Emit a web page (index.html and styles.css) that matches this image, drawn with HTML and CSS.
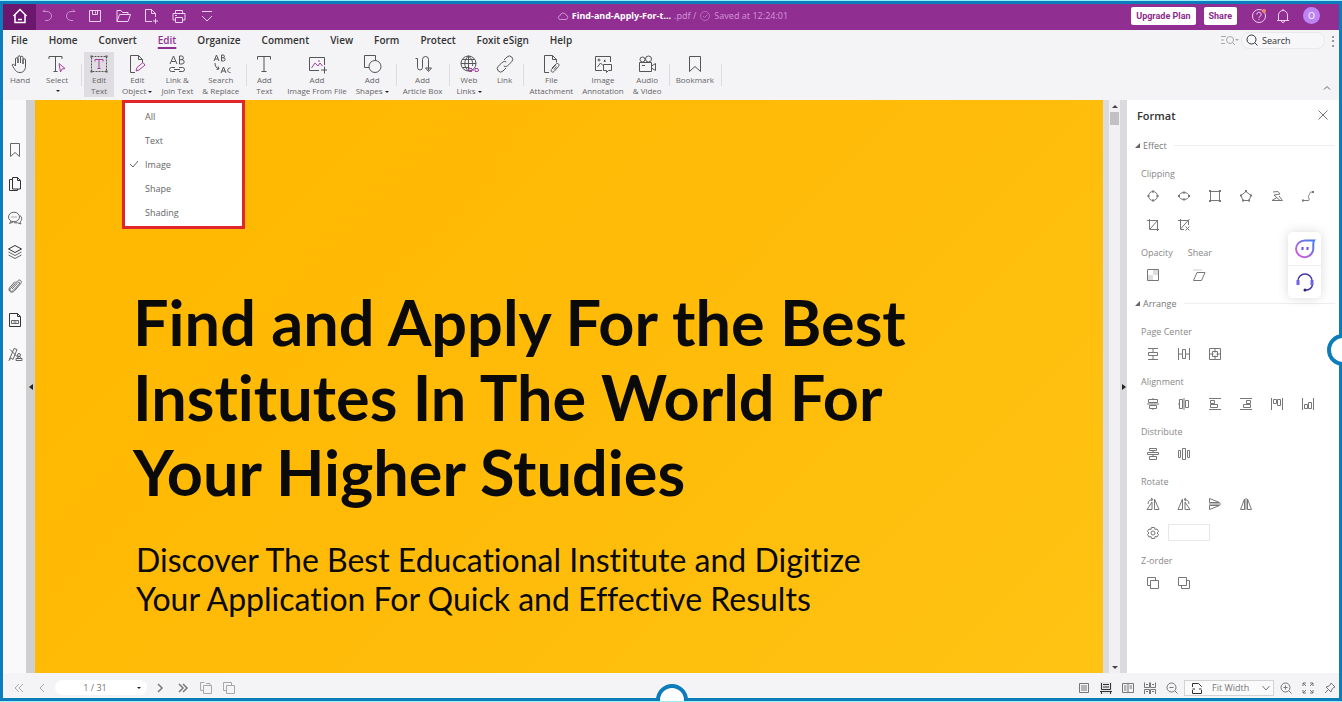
FILE: index.html
```html
<!DOCTYPE html>
<html lang="en">
<head>
    <meta charset="utf-8">
    <title>Find-and-Apply-For-the-Best.pdf</title>
    <link rel="stylesheet" href="styles.css">
</head>
<body>
<div class="frame">
    <div class="app">
        <header class="titlebar">
            <button class="home-btn" aria-label="Home">
                <svg class="icon" viewBox="0 0 16 16"><path class="thick" d="M1.500 8 8 1.500 14.500 8M3 7v7.500h10V7M6 11.500h4"/></svg>
            </button>
            <div class="quick">
                <button aria-label="Undo"><svg class="icon dim" viewBox="0 0 16 16"><path d="M4 3.500h4a4 4 0 0 1 0 9H6M4 3.500l2-2"/></svg></button>
                <button aria-label="Redo"><svg class="icon dim" viewBox="0 0 16 16"><path d="M12 3.500H8a4 4 0 0 0 0 9h2M12 3.500l-2-2"/></svg></button>
                <button aria-label="Save"><svg class="icon" viewBox="0 0 16 16"><path d="M2.500 2.500h11v11h-11zM5.500 2.500v4h5v-4M8.500 3.500v2"/></svg></button>
                <button aria-label="Open"><svg class="icon" viewBox="0 0 16 16"><path d="M2 13.500v-11h4l1.500 2h5.500v2M2 13.500l2.500-7h11l-2.500 7z"/></svg></button>
                <button aria-label="New"><svg class="icon" viewBox="0 0 16 16"><path d="M9 13.500H2.500v-12h6l4 4V9M8.500 1.500v4h4M12.500 10.500v5M10 13h5"/></svg></button>
                <button aria-label="Print"><svg class="icon" viewBox="0 0 16 16"><path d="M4.500 5V2.500h7V5M4 12H2V5.500h12V12h-2M4.500 9.500h7v5h-7zM4 7.500h2"/></svg></button>
                <button aria-label="More"><svg class="icon" viewBox="0 0 16 16"><path d="M3 3.500h10M3 8l5 5 5-5"/></svg></button>
            </div>
            <div class="doc-name">
                <svg class="icon-s" viewBox="0 0 12 12"><path d="M3.500 9.500a2 2 0 0 1-.3-4 3 3 0 0 1 5.800-.5 2.300 2.300 0 0 1 0 4.500z"/></svg>
                <b>Find-and-Apply-For-t...</b>
                <span>.pdf /</span>
                <svg class="icon-s dim" viewBox="0 0 12 12"><circle cx="6" cy="6" r="4.500"/><path d="m4 6 1.500 1.500L8.500 4.500"/></svg>
                <span>Saved at 12:24:01</span>
            </div>
            <div class="account">
                <button class="pill">Upgrade Plan</button>
                <button class="pill">Share</button>
                <button class="bar-icon first" aria-label="Help"><svg class="icon" viewBox="0 0 16 16"><circle cx="8" cy="8" r="6.500"/><path d="M5.800 6.500a2.200 2.200 0 1 1 3 2c-.6.300-.8.600-.8 1.300M8 11v1"/><circle class="dot" cx="13" cy="3" r="2"/></svg></button>
                <button class="bar-icon" aria-label="Notifications"><svg class="icon" viewBox="0 0 16 16"><path d="M2 12.500h12M3.500 12.500V7a4.500 4.500 0 0 1 9 0v5.500M6.500 13a1.500 1.500 0 0 0 3 0M8 2.500V1"/></svg></button>
                <button class="avatar">O</button>
            </div>
        </header>

        <nav class="tabs">
            <button class="tab">File</button>
            <button class="tab">Home</button>
            <button class="tab">Convert</button>
            <button class="tab active">Edit</button>
            <button class="tab">Organize</button>
            <button class="tab">Comment</button>
            <button class="tab">View</button>
            <button class="tab">Form</button>
            <button class="tab">Protect</button>
            <button class="tab">Foxit eSign</button>
            <button class="tab">Help</button>
            <div class="search-area">
                <button class="find-opt" aria-label="Search options"><svg class="icon-w" viewBox="0 0 20 12"><path d="M2 2.500h5M2 6h3M2 9.500h4M14 9l2 2"/><circle cx="11" cy="6" r="3.500"/><path class="solid" d="M16 5h4l-2 2z"/></svg></button>
                <label class="search">
                    <svg class="icon-s" viewBox="0 0 12 12"><circle cx="5.500" cy="5.500" r="4.500"/><path d="m9 9 2.500 2.500"/></svg>
                    <input type="text" placeholder="Search" aria-label="Search">
                </label>
                <button class="kebab" aria-label="More options">⋮</button>
            </div>
        </nav>

        <div class="ribbon">
            <button class="tool gap-l"><svg class="icon-l" viewBox="0 0 20 20"><path d="M5.500 12V5a1.200 1.200 0 0 1 2.500 0v4V3a1.200 1.200 0 0 1 2.500 0v6V3.500a1.200 1.200 0 0 1 2.500 0V10 6a1.200 1.200 0 0 1 2.500 0v6c0 4-2 6.500-5.500 6.500-4 0-5-2.500-8-7.500 1-1.500 2.500-.5 3.500 1z"/></svg>Hand</button>
            <button class="tool tool-arrow gap-l"><svg class="icon-l" viewBox="0 0 20 20"><path d="M2 5V2.500h13V5M8.500 2.500v15M6.500 17.500h4"/><path class="acc" d="m12 9.500 6 5-3 .5-1.500 3z"/></svg>Select<i class="caret"></i></button>
            <span class="sep"></span>
            <button class="tool on gap-s"><svg class="icon-l" viewBox="0 0 20 20"><path stroke-dasharray="2 1" d="M2.500 2.500h15v15h-15z"/><path class="solid" d="M1.500 1.500h2v2h-2zM16.500 1.500h2v2h-2zM1.500 16.500h2v2h-2zM16.500 16.500h2v2h-2z"/><path class="acc" d="M6 7.500V5.500h8v2M10 5.500v9M8.500 14.500h3"/></svg>Edit<br>Text</button>
            <div class="tool-wrap">
                <button class="tool"><svg class="icon-l" viewBox="0 0 20 20"><path d="M8 18.500H3.500v-17h8l4 4v3M11.500 1.500v4h4"/><path class="acc" d="m9 17 1-3.500 6-5 2 2.500-6 5z"/></svg>Edit<br><span>Object<i class="caret"></i></span></button>
                <ul class="menu">
                    <li><button class="menu-item">All</button></li>
                    <li><button class="menu-item">Text</button></li>
                    <li><button class="menu-item"><svg class="check" viewBox="0 0 10 10"><path d="m1 5 3 3 5-6"/></svg>Image</button></li>
                    <li><button class="menu-item">Shape</button></li>
                    <li><button class="menu-item">Shading</button></li>
                </ul>
            </div>
            <button class="tool"><svg class="icon-l" viewBox="0 0 20 20"><path d="m3 10 3.500-8L10 10M4.500 7.500h4M12.500 2v8h2.500a2 2 0 0 0 0-4.300h-2.500M12.500 2h2a1.800 1.800 0 0 1 0 3.700M8 13.500H4.500a2 2 0 0 0 0 4H8M12 13.500h3.500a2 2 0 0 1 0 4H12M7 15.500h6"/></svg>Link &amp;<br>Join Text</button>
            <button class="tool"><svg class="icon-l" viewBox="0 0 20 20"><path d="m3 7 2.500-6L8 7M4 5h3M10.500 1v6h2a1.500 1.500 0 0 0 0-3.200h-2M10.500 1h1.500a1.300 1.300 0 0 1 0 2.800M4 9c0 3 1 5 4 6M8 15l-2.500.5M8 15l-1-2.500M10 19l2.500-6 2.500 6M11 17h3M19.500 14a2.300 2.300 0 1 0 0 4.500"/></svg>Search<br>&amp; Replace</button>
            <span class="sep"></span>
            <button class="tool gap-s"><svg class="icon-l" viewBox="0 0 20 20"><path d="M3.500 5.500v-3h13v3M10 2.500v15M7.500 17.500h5"/></svg>Add<br>Text</button>
            <button class="tool"><svg class="icon-l" viewBox="0 0 20 20"><path d="M12 16.500H2.500v-13h15V11M17.500 12.500v7M14 16h6"/><path class="acc" d="m4.500 14 3.500-5 3 3 2-3 2.500 3M11 7h2"/></svg>Add<br>Image From File</button>
            <button class="tool"><svg class="icon-l" viewBox="0 0 20 20"><path d="M7 13.500H2.500v-12h11V6"/><circle cx="13" cy="12.500" r="6"/></svg>Add<br><span>Shapes<i class="caret"></i></span></button>
            <span class="sep"></span>
            <button class="tool"><svg class="icon-l" viewBox="0 0 20 20"><path d="M2.500 4.500h2v9a2.500 2.500 0 0 0 5 0v-8a3 3 0 0 1 6 0v11M12.500 14l3 3.500 3-3.500z"/></svg>Add<br>Article Box</button>
            <span class="sep"></span>
            <button class="tool gap-s"><svg class="icon-l" viewBox="0 0 20 20"><circle cx="9.500" cy="9.500" r="7.500"/><path d="M2 9.500h15M3.500 5.500h12M3.500 13.500h7M9.500 2v15M9.500 2c-5 4-5 11 0 15M9.500 2c4 3 4.500 7 4 10"/><path class="acc" d="M13 14.500h-2a1.500 1.500 0 0 0 0 3h2M16 14.500h2a1.500 1.500 0 0 1 0 3h-2M12 16h5"/></svg>Web<br><span>Links<i class="caret"></i></span></button>
            <button class="tool"><svg class="icon-l" viewBox="0 0 20 20"><path d="m9 6 3-3a3.200 3.200 0 0 1 4.700 4.700l-4 4a3.200 3.200 0 0 1-4 .3M11 14l-3 3a3.200 3.200 0 0 1-4.700-4.700l4-4a3.200 3.200 0 0 1 4-.3"/></svg>Link</button>
            <span class="sep"></span>
            <button class="tool"><svg class="icon-l" viewBox="0 0 20 20"><path d="M8 18.500H3.500v-17h8l4 4v3M11.500 1.500v4h4M11 14l4-4c2-1.500 4 .5 2.500 2.500l-4.500 5c-1.500 1.500-4 0-2.500-2l4-4.500M13 15.500l2.500-3"/></svg>File<br>Attachment</button>
            <button class="tool"><svg class="icon-l" viewBox="0 0 20 20"><path d="M9 16.500H2.500v-14h15V8M4.500 13l3-4 2.500 2.500M10.500 10.500h8v6h-3l-2 2v-2h-3zM12 5.500l-1 2 2-.5"/><circle cx="6" cy="6" r="1"/></svg>Image<br>Annotation</button>
            <button class="tool"><svg class="icon-l" viewBox="0 0 20 20"><path d="M2.500 8.500h12v9h-12zM14.500 12l4-2.500v7l-4-2.500M5 11.500h3"/><circle cx="5.500" cy="5.500" r="2.500"/><circle cx="11.500" cy="5" r="3"/></svg>Audio<br>&amp; Video</button>
            <span class="sep"></span>
            <button class="tool"><svg class="icon-l" viewBox="0 0 20 20"><path d="M4.500 2.500h11v15L10 12.500l-5.500 5z"/></svg>Bookmark</button>
            <span class="sep"></span>
            <button class="collapse" aria-label="Collapse ribbon"><svg class="icon-s" viewBox="0 0 12 12"><path d="m3 7.500 3-3 3 3"/></svg></button>
        </div>

        <main class="work">
            <aside class="rail">
                <button aria-label="Bookmarks"><svg class="icon" viewBox="0 0 16 16"><path d="M3.500 1.500h9v13L8 10.500l-4.500 4z"/></svg></button>
                <button aria-label="Pages"><svg class="icon dark" viewBox="0 0 16 16"><path d="M5.500 1.500h5l3 3v8.500h-8zM10.500 1.500v3h3M5.500 3.500h-3v11h8V13"/></svg></button>
                <button aria-label="Comments"><svg class="icon" viewBox="0 0 16 16"><ellipse cx="7" cy="7" rx="5.500" ry="4.800"/><path d="m4 11-1.500 2.500 4-1.700M13 5.500c2.500 2 2 5 0 6.500l1 2-3.500-1.200H7M4.500 7h1M6.500 7h1M8.500 7h1"/></svg></button>
                <button aria-label="Layers"><svg class="icon" viewBox="0 0 16 16"><path class="dark" d="m8 1.500 6.500 3.500L8 8.500 1.500 5z"/><path d="M1.500 8 8 11.500 14.500 8M1.500 11 8 14.500l6.500-3.500"/></svg></button>
                <button aria-label="Attachments"><svg class="icon" viewBox="0 0 16 16"><path d="m5 11 6-6.500c1-1 2.300.2 1.400 1.300l-6.500 7C4.500 14.300 2 12.500 3.500 10.500l7-7.500c2.200-2.300 5 0 3.300 2.500l-6.300 7.300c-2.500 3-7 .5-5-3L8 3.500"/></svg></button>
                <button aria-label="Fields"><svg class="icon" viewBox="0 0 16 16"><path class="dark" d="M2.500 1.500h8l3 3v10h-11zM10.500 1.500v3h3"/><path d="M4.500 8.500h7v3h-7zM6.500 10h3"/></svg></button>
                <button aria-label="Signatures"><svg class="icon" viewBox="0 0 16 16"><path d="m2 14.500 5-12 3 1-4 10-2-1.500zM3 3.500l9 9M9 14.500h6v-2H9zM10.500 12.500l.5-2h2l.5 2"/><circle cx="12" cy="9" r="1.500"/></svg></button>
            </aside>
            <button class="rail-edge" aria-label="Hide navigation"><i class="tri-left"></i></button>
            <section class="page">
                <h1 class="headline">Find and Apply For the Best<br>Institutes In The World For<br>Your Higher Studies</h1>
                <p class="subhead">Discover The Best Educational Institute and Digitize<br>Your Application For Quick and Effective Results</p>
            </section>
            <div class="scroll">
                <i class="arrow-up"></i>
                <i class="thumb"></i>
                <i class="arrow-down"></i>
            </div>
            <button class="panel-edge" aria-label="Hide format panel"><i class="tri-right"></i></button>

            <aside class="panel">
                <div class="panel-head">
                    <h2 class="panel-title">Format</h2>
                    <button class="close" aria-label="Close"><svg class="icon-s" viewBox="0 0 12 12"><path d="m1.500 1.500 9 9M10.500 1.500l-9 9"/></svg></button>
                </div>

                <h3 class="section">Effect</h3>
                <div class="group">
                    <span class="group-label">Clipping</span>
                    <div class="icons">
                        <button aria-label="Circle"><svg class="icon-p" viewBox="0 0 14 14"><circle cx="7" cy="7" r="4.500"/><path class="solid" d="M6 1.500h2v2H6zM6 10.500h2v2H6zM1.500 6h2v2h-2zM10.500 6h2v2h-2z"/></svg></button>
                        <button aria-label="Ellipse"><svg class="icon-p" viewBox="0 0 14 14"><ellipse cx="7" cy="7" rx="5" ry="3.500"/><path class="solid" d="M6 2.500h2v2H6zM6 9.500h2v2H6zM1 6h2v2H1zM11 6h2v2h-2z"/></svg></button>
                        <button aria-label="Rectangle"><svg class="icon-p" viewBox="0 0 14 14"><path d="M2.500 2.500h9v9h-9z"/><path class="solid" d="M1 1h2v2H1zM11 1h2v2h-2zM1 11h2v2H1zM11 11h2v2h-2z"/></svg></button>
                        <button aria-label="Polygon"><svg class="icon-p" viewBox="0 0 14 14"><path d="m7 2.500 5 4-2 5H4l-2-5z"/><path class="solid" d="M6 1h2v2H6zM11 5.500h2v2h-2zM1 5.500h2v2H1zM3 10.500h2v2H3zM9 10.500h2v2H9z"/></svg></button>
                        <button aria-label="Polyline"><svg class="icon-p" viewBox="0 0 14 14"><path d="m3 3 5-.5 2 2.500-6 1 6 5.500H2l5-3M9 7l3.500 4.500H8"/></svg></button>
                        <button aria-label="Curve"><svg class="icon-p" viewBox="0 0 14 14"><path d="M2 11.500h5c3 0-1-4 1-5.500s-1-3 4-3"/><path class="solid" d="M1 10.500h2v2H1zM11 2h2v2h-2z"/></svg></button>
                        <button aria-label="Edit clip"><svg class="icon-p" viewBox="0 0 14 14"><path d="M3.500 1v10.500H13M1 2.500h10.500V13M12 2l-8 9"/></svg></button>
                        <button aria-label="Clear clip"><svg class="icon-p" viewBox="0 0 14 14"><path d="M3.500 1v10.500H7M1 2.500h10.500V7M12.500 1l-9 10M8.500 8.500l4 4M12.500 8.500l-4 4"/></svg></button>
                    </div>
                </div>
                <div class="pair">
                    <div class="group">
                        <span class="group-label">Opacity</span>
                        <div class="icons"><button aria-label="Opacity"><svg class="icon-p" viewBox="0 0 14 14"><path class="tint" d="M7 2h5v5H7zM2 7h5v5H2z"/><path d="M1.500 1.500h11v11h-11z"/></svg></button></div>
                    </div>
                    <div class="group">
                        <span class="group-label">Shear</span>
                        <div class="icons"><button aria-label="Shear"><svg class="icon-p" viewBox="0 0 14 14"><path d="M5 4.500h8l-3.500 8h-8z"/><path class="faint" d="M1 2h9"/></svg></button></div>
                    </div>
                </div>

                <h3 class="section">Arrange</h3>
                <div class="group">
                    <span class="group-label">Page Center</span>
                    <div class="icons">
                        <button aria-label="Center vertically"><svg class="icon-p" viewBox="0 0 14 14"><path d="M2 1.500h10M2 12.500h10M2.500 5.500h9v3h-9zM7 1.500v4M7 8.500v4"/></svg></button>
                        <button aria-label="Center horizontally"><svg class="icon-p" viewBox="0 0 14 14"><path d="M1.500 1v12M12.500 1v12M5.500 2.500h3v9h-3zM1.500 7h4M8.500 7h4"/></svg></button>
                        <button aria-label="Center both"><svg class="icon-p" viewBox="0 0 14 14"><path d="M1.500 1.500h11v11h-11zM4.500 4.500h5v5h-5zM7 1.500v4M7 8.500v4M1.500 7h4M8.500 7h4"/></svg></button>
                    </div>
                </div>
                <div class="group">
                    <span class="group-label">Alignment</span>
                    <div class="icons">
                        <button aria-label="Align middle"><svg class="icon-p" viewBox="0 0 14 14"><path d="M2.500 2.500h9v3h-9zM3.500 8.500h7v3h-7zM1 7h12M7 1v1M7 12v1"/></svg></button>
                        <button aria-label="Align center"><svg class="icon-p" viewBox="0 0 14 14"><path d="M2.500 2.500h3v9h-3zM8.500 3.500h3v7h-3zM7 1v12M1 7h1"/></svg></button>
                        <button aria-label="Align left"><svg class="icon-p" viewBox="0 0 14 14"><path d="M1 1.500h12M1 12.500h12M2.500 3.500h4v3h-4zM2.500 7.500h7v3h-7z"/></svg></button>
                        <button aria-label="Align right"><svg class="icon-p" viewBox="0 0 14 14"><path d="M1 1.500h12M1 12.500h12M7.500 3.500h4v3h-4zM4.500 7.500h7v3h-7z"/></svg></button>
                        <button aria-label="Align top"><svg class="icon-p" viewBox="0 0 14 14"><path d="M1.500 1v12M12.500 1v12M3.500 2.500h3v4h-3zM7.500 2.500h3v6h-3z"/></svg></button>
                        <button aria-label="Align bottom"><svg class="icon-p" viewBox="0 0 14 14"><path d="M1.500 1v12M12.500 1v12M3.500 7.500h3v4h-3zM7.500 5.500h3v6h-3z"/></svg></button>
                    </div>
                </div>
                <div class="group">
                    <span class="group-label">Distribute</span>
                    <div class="icons">
                        <button aria-label="Distribute vertically"><svg class="icon-p" viewBox="0 0 14 14"><path d="M3.500 1.500h7v2h-7zM1.500 5.500h11v2h-11zM3.500 9.500h7v3h-7zM7 3.500v2M7 7.500v2"/></svg></button>
                        <button aria-label="Distribute horizontally"><svg class="icon-p" viewBox="0 0 14 14"><path d="M1.500 3.500h2v7h-2zM5.500 1.500h3v11h-3zM10.500 3.500h2v7h-2z"/></svg></button>
                    </div>
                </div>
                <div class="group">
                    <span class="group-label">Rotate</span>
                    <div class="icons">
                        <button aria-label="Rotate left"><svg class="icon-p" viewBox="0 0 14 14"><path d="M6 5v7.500H1zM8.500 2v10.500H13zM2 7c0-3 2-4.500 5-4.500M5 1l2 1.500L5 4"/></svg></button>
                        <button aria-label="Rotate right"><svg class="icon-p" viewBox="0 0 14 14"><path d="M5.500 2v10.500H1zM8 5v7.500h5zM12 7c0-3-2-4.500-5-4.500M9 1 7 2.500 9 4"/></svg></button>
                        <button aria-label="Flip vertically"><svg class="icon-p" viewBox="0 0 14 14"><path d="M1.500 1.500v4h10zM1.500 12.500v-4h10zM1 7h12"/></svg></button>
                        <button aria-label="Flip horizontally"><svg class="icon-p" viewBox="0 0 14 14"><path d="M5.500 2v10.500h-4zM8.500 2v10.500h4zM7 1v12"/></svg></button>
                    </div>
                    <div class="icons">
                        <button aria-label="Rotation angle"><svg class="icon-p" viewBox="0 0 14 14"><circle cx="7" cy="7" r="2"/><path d="M5.500 1.500h3l.5 2 2-.5 1.500 2.500L11 7l1.500 1.500L11 11l-2-.5-.5 2h-3l-.5-2-2 .5-1.500-2.500L3 7 1.500 5.500 3 3l2 .5z"/></svg></button>
                        <input class="angle" type="text" aria-label="Angle">
                    </div>
                </div>
                <div class="group">
                    <span class="group-label">Z-order</span>
                    <div class="icons">
                        <button aria-label="Bring forward"><svg class="icon-p" viewBox="0 0 14 14"><path d="M4.500 9.500h-3v-8h8v3M4.500 4.500h8v8h-8z"/></svg></button>
                        <button aria-label="Send backward"><svg class="icon-p" viewBox="0 0 14 14"><path d="M1.500 1.500h8v8h-8zM9.500 4.500h3v8h-8v-3"/></svg></button>
                    </div>
                </div>
            </aside>
        </main>

        <footer class="status">
            <div class="pager">
                <button aria-label="First page"><svg class="icon-s mid" viewBox="0 0 12 12"><path d="M6 2 2 6l4 4M10 2 6 6l4 4"/></svg></button>
                <button aria-label="Previous page"><svg class="icon-s mid" viewBox="0 0 12 12"><path d="M8 2 4 6l4 4"/></svg></button>
                <div class="page-no">
                    <input type="text" value="1 / 31" aria-label="Page">
                    <i class="caret"></i>
                </div>
                <button aria-label="Next page"><svg class="icon-s" viewBox="0 0 12 12"><path class="thick" d="m4 2 4 4-4 4"/></svg></button>
                <button aria-label="Last page"><svg class="icon-s" viewBox="0 0 12 12"><path class="thick" d="m2 2 4 4-4 4M6 2l4 4-4 4"/></svg></button>
                <button aria-label="Previous view"><svg class="icon-s mid" viewBox="0 0 12 12"><path d="M3.500 8.500h-3v-8h4M6 1.500h4v2M3.500 3.500h8v8h-8z"/></svg></button>
                <button aria-label="Next view"><svg class="icon-s mid" viewBox="0 0 12 12"><path d="M3.500 8.500h-3v-8h8v3M3.500 3.500h8v8h-8z"/></svg></button>
            </div>
            <div class="view">
                <button aria-label="Single page"><svg class="icon-s" viewBox="0 0 12 12"><path d="M1.500 1.500h9v9h-9zM3 4h6M3 6h6M3 8h6"/></svg></button>
                <button class="on" aria-label="Continuous"><svg class="icon-s dark" viewBox="0 0 12 12"><path d="M1.500 1v6.500h9V1M3 2.500h6M3 5h6M0 9.500h12M1.500 12V9.500M10.500 12V9.500"/></svg></button>
                <button aria-label="Facing"><svg class="icon-s" viewBox="0 0 12 12"><path d="M.5 1.500h11v9H.5zM6 1.500v9M2 4h2.500M2 6h2.500M2 8h2.500M7.500 4H10M7.500 6H10"/></svg></button>
                <button aria-label="Continuous facing"><svg class="icon-s" viewBox="0 0 12 12"><path d="M.5.500v5h5v-5M6.500.500v5h5v-5M2 2.500h2M8 2.500h2M.5 12V7.500h5V12M6.500 12V7.500h5V12M2 9.500h2M8 9.500h2"/></svg></button>
                <button aria-label="Zoom out"><svg class="icon-s" viewBox="0 0 12 12"><circle cx="5.500" cy="5.500" r="4.500"/><path d="m9 9 2.500 2.500M3.500 5.500h4"/></svg></button>
                <div class="zoom">
                    <svg class="icon-s dark" viewBox="0 0 12 12"><path d="M1.500 5V1.500h6l3 3V5M1.500 8v3.500h9V8M1.500 7h2.500M8 7h2.500"/></svg>
                    <select aria-label="Zoom level"><option>Fit Width</option></select>
                    <svg class="icon-s" viewBox="0 0 12 12"><path d="m2.500 4 3.500 4 3.500-4"/></svg>
                </div>
                <button aria-label="Zoom in"><svg class="icon-s" viewBox="0 0 12 12"><circle cx="5.500" cy="5.500" r="4.500"/><path d="m9 9 2.500 2.500M3.500 5.500h4M5.500 3.500v4"/></svg></button>
                <button aria-label="Full screen"><svg class="icon-s" viewBox="0 0 12 12"><path d="M1 4V1h3M8 1h3v3M11 8v3H8M4 11H1V8M1 1l3 3M11 1 8 4M11 11 8 8M1 11l3-3"/></svg></button>
                <button aria-label="Pin"><svg class="icon-s" viewBox="0 0 12 12"><path d="m7 1 4 4-1.500.5L7.500 8 7 10 2 5l2-.5L6.500 2.500zM4.500 7.500 1 11"/></svg></button>
            </div>
        </footer>

        <div class="chat">
            <button aria-label="AI assistant">
                <svg class="icon-xl" viewBox="0 0 22 22">
                    <defs><linearGradient id="bot" x1="1" y1="0" x2="0" y2="1"><stop offset="0" stop-color="#3f7df0"/><stop offset="1" stop-color="#e05ad8"/></linearGradient></defs>
                    <path class="bot" d="M20 2.500c-1 1.500-.7 3-.7 7.500A8.500 8.500 0 0 1 2 11c0-5 4-8.500 9-8.500z"/>
                    <path class="eyes" d="M8.500 9v3M13.500 9v3"/>
                </svg>
            </button>
            <button aria-label="Support">
                <svg class="icon-xl" viewBox="0 0 22 22"><path class="band" d="M4 10a7 7 0 0 1 14 0M18.500 13c0 3.500-3 6-7 6"/><path class="cup" d="M4 9v5M18 9v5"/><circle class="mic" cx="11" cy="19" r="1.500"/></svg>
            </button>
        </div>
    </div>
    <i class="handle handle-right"></i>
    <i class="handle handle-bottom"></i>
</div>
</body>
</html>
```
FILE: styles.css
```css
* {
    box-sizing: border-box;
}
body {
    margin: 0;
    font-family: "Open Sans", "Noto Sans", sans-serif;
    font-size: 9px;
    color: #555;
}
button, input, select {
    font: inherit;
    color: inherit;
    background: none;
    border: 0;
    padding: 0;
    margin: 0;
}
button {
    display: flex;
    align-items: center;
    justify-content: center;
}
h1, h2, h3, p, ul {
    margin: 0;
    padding: 0;
}
.frame {
    position: relative;
    height: 100vh;
    overflow: hidden;
    border: solid #96f0fa;
    border-width: 1px 0;
}
.app {
    position: relative;
    height: 100%;
    display: flex;
    flex-direction: column;
    border: 3px solid #0c7cba;
    background: #f4f3f6;
}

/* icons */
svg {
    fill: none;
    stroke: currentColor;
    stroke-width: 1;
    flex: none;
}
.icon { width: 16px; height: 16px; }
.icon-s { width: 12px; height: 12px; }
.icon-p { width: 14px; height: 14px; }
.icon-l { width: 20px; height: 20px; }
.icon-w { width: 20px; height: 12px; }
.icon-xl { width: 22px; height: 22px; }
.thick { stroke-width: 1.5; }
.solid { fill: currentColor; stroke: none; }
.tint { fill: #ddd; stroke: none; }
.faint { stroke: #ccc; }
.acc { stroke: #a5409f; }
.dot { fill: #f08a6a; stroke: none; }
.dim { opacity: 0.6; }
.mid { opacity: 0.6; }
.dark { color: #333; stroke: #333; }
.caret {
    display: inline-block;
    border: 2px solid transparent;
    border-top-color: #222;
    border-bottom: 0;
    margin-left: 2px;
    vertical-align: middle;
}

/* title bar */
.titlebar {
    display: flex;
    align-items: center;
    height: 26px;
    padding-bottom: 3px;
    background: #912e92;
    color: #f0d2f2;
}
.home-btn {
    align-self: flex-start;
    width: 33px;
    height: 26px;
    padding-bottom: 3px;
    background: #6b176d;
    color: #fff;
}
.quick {
    display: flex;
    flex: 1 0 0;
    gap: 12px;
    padding-left: 3px;
}
.quick .dim { margin-right: -4px; }
.doc-name {
    display: flex;
    align-items: center;
    gap: 3px;
    font-family: "Noto Sans", sans-serif;
    color: #cf8fd3;
}
.doc-name b { color: #fff; }
.account {
    display: flex;
    flex: 1 0 33px;
    align-items: center;
    justify-content: flex-end;
    gap: 8px;
    padding-right: 19px;
}
.pill {
    height: 18px;
    padding: 0 5px;
    border-radius: 2px;
    background: #fff;
    color: #8b2c8c;
    font-family: Roboto, sans-serif;
    font-weight: 700;
}
.bar-icon.first { margin-left: 6px; }
.avatar {
    width: 17px;
    height: 17px;
    margin-left: 4px;
    border-radius: 50%;
    background: #bd84f5;
    color: #fff;
}

/* menu tabs */
.tabs {
    display: flex;
    align-items: center;
    height: 20px;
    color: #333;
}
.tab {
    height: 20px;
    padding: 0 8px;
    margin-right: 5px;
    font-size: 10px;
    font-weight: 600;
}
.tab.active {
    color: #912e92;
    text-decoration: underline;
    text-decoration-thickness: 2px;
    text-underline-offset: 3px;
}
.search-area {
    display: flex;
    align-items: center;
    gap: 2px;
    margin-left: auto;
}
.find-opt { color: #aaa; }
.search {
    display: flex;
    align-items: center;
    gap: 4px;
    height: 17px;
    width: 84px;
    padding: 0 4px;
    border: 1px solid #e9e8eb;
    border-radius: 8px;
    background: #f7f6f9;
}
.search input {
    width: 100%;
    min-width: 0;
}
.search input::placeholder { color: #333; }
.kebab {
    width: 12px;
    font-size: 12px;
    color: #666;
}

/* ribbon */
.ribbon {
    display: flex;
    align-items: flex-start;
    height: 50px;
    padding: 2px 0 0 2px;
    color: #666;
}
.tool {
    flex-direction: column;
    justify-content: flex-start;
    min-width: 30px;
    height: 45px;
    padding: 2px 4px 0;
    margin-right: 1px;
    font-size: 8px;
    line-height: 11px;
    text-align: center;
}
.tool .icon-l { color: #555; }
.tool-arrow .caret { margin-top: 5px; }
.tool.on { background: #dfdde1; }
.tool.gap-s { margin-right: 4px; }
.tool.gap-l { margin-right: 7px; }
.sep {
    width: 1px;
    height: 22px;
    margin: 12px 2px 0;
    background: #dcdbde;
}
.collapse {
    align-self: flex-end;
    margin-left: auto;
    padding: 6px;
}
.tool-wrap { position: relative; }

/* edit object menu, opens over the page */
.menu {
    position: absolute;
    z-index: 2;
    top: 48px;
    left: 4px;
    width: 123px;
    padding: 1px 0 2px;
    border: 3px solid #e1262b;
    background: #fff;
    list-style: none;
}
.menu-item {
    position: relative;
    justify-content: flex-start;
    width: 100%;
    height: 24px;
    padding-left: 20px;
}
.check {
    position: absolute;
    left: 4px;
    width: 10px;
    height: 10px;
}

/* work area */
.work {
    display: flex;
    flex: 1;
    min-height: 0;
}
.rail {
    display: flex;
    flex-direction: column;
    align-items: center;
    gap: 18px;
    width: 23px;
    padding-top: 42px;
    background: #f9f9fa;
    color: #666;
}
.rail-edge {
    width: 9px;
    background: #cfcfd1;
}
.panel-edge {
    width: 7px;
    background: #dbdadd;
}
.tri-left, .tri-right {
    border: 3px solid transparent;
    border-left: 0;
    border-right: 4px solid #222;
}
.tri-right {
    border-left: 4px solid #222;
    border-right: 0;
}
.page {
    flex: 1;
    min-width: 0;
    padding: 184px 0 0 98px;
    background: linear-gradient(135deg, #ffb800, #ffbb08 50%, #ffc313);
    color: #0a0a0a;
    font-family: Lato, sans-serif;
    font-variant-ligatures: none;
    white-space: nowrap;
}
.headline {
    font-size: 63px;
    font-weight: 700;
    line-height: 75px;
}
.subhead {
    margin: 31px 0 0 3px;
    font-size: 32px;
    line-height: 39px;
}
.scroll {
    display: flex;
    flex-direction: column;
    align-items: center;
    width: 17px;
    padding: 5px 0 4px;
    border-left: 6px solid #dbdadd;
    background: #f1f0f3;
}
.arrow-up, .arrow-down {
    border: 3px solid transparent;
    border-bottom-color: #444;
    border-top: 0;
}
.arrow-down {
    margin-top: auto;
    border-top: 3px solid #444;
    border-bottom: 0;
}
.thumb {
    width: 9px;
    height: 13px;
    margin-top: 4px;
    background: #c1c0c3;
}

/* format panel */
.panel {
    width: 212px;
    padding: 6px 4px 0 10px;
    background: #fff;
    color: #777;
}
.panel-head {
    display: flex;
    align-items: center;
    justify-content: space-between;
    height: 18px;
    padding-right: 6px;
    margin-bottom: 13px;
}
.panel-title {
    color: #333;
    font-size: 11px;
    font-weight: 600;
}
.section {
    display: flex;
    align-items: center;
    gap: 3px;
    height: 16px;
    margin: 0 0 13px -2px;
    font-size: 9px;
    font-weight: 400;
}
.section::before {
    content: "";
    border-left: 5px solid transparent;
    border-bottom: 5px solid #666;
}
.section::after {
    content: "";
    flex: 1;
    height: 1px;
    margin-left: 4px;
    background: #eee;
}
.group { margin-bottom: 6px; }
.group-label {
    display: block;
    height: 15px;
    padding-left: 4px;
    line-height: 15px;
    color: #888;
}
.icons {
    display: flex;
    flex-wrap: wrap;
    align-items: center;
}
.icons button {
    width: 31px;
    height: 29px;
}
.pair {
    display: flex;
    gap: 11px;
}
.angle {
    width: 42px;
    height: 17px;
    border: 1px solid #e8e8ea;
}

/* status bar */
.status {
    display: flex;
    align-items: center;
    justify-content: space-between;
    height: 25px;
    padding: 4px 3px 0 10px;
    color: #777;
}
.pager, .view {
    display: flex;
    align-items: center;
    gap: 11px;
}
.view { gap: 10px; }
.page-no {
    display: flex;
    align-items: center;
    width: 92px;
    height: 15px;
    margin: 0 -4px;
    padding-right: 6px;
    border-radius: 8px;
    background: #fff;
}
.page-no input {
    width: 100%;
    min-width: 0;
    text-align: center;
}
.view .on { background: #e5e4e7; }
.zoom {
    display: flex;
    align-items: center;
    width: 90px;
    height: 16px;
    margin: 0 -4px;
    padding: 0 1px 0 6px;
    border: 1px solid #d2d1d4;
    background: #fafafb;
}
.zoom select {
    flex: 1;
    min-width: 0;
    padding-left: 9px;
    appearance: none;
}

/* floating assistant buttons */
.chat {
    position: absolute;
    right: 18px;
    top: 228px;
    width: 33px;
    border-radius: 5px;
    background: #fff;
    box-shadow: 0 0 12px rgba(0, 0, 0, 0.15);
}
.chat button {
    width: 33px;
    height: 33px;
}
.chat button + button { border-top: 1px solid #eee; }
.bot { stroke: url(#bot); stroke-width: 2; }
.eyes { stroke: #6a4be0; stroke-width: 2; }
.band { stroke: #4238a8; stroke-width: 1.5; }
.cup { stroke: #6c63e8; stroke-width: 3; }
.mic { fill: #2a2370; stroke: none; }

/* selection handles on the frame */
.handle {
    position: absolute;
    width: 32px;
    height: 32px;
    border: 4px solid #0c7cba;
    border-radius: 50%;
    background: #fff;
}
.handle-right {
    right: -17px;
    top: calc(50% - 17px);
}
.handle-bottom {
    bottom: -15px;
    left: calc(50% - 15px);
}
```
